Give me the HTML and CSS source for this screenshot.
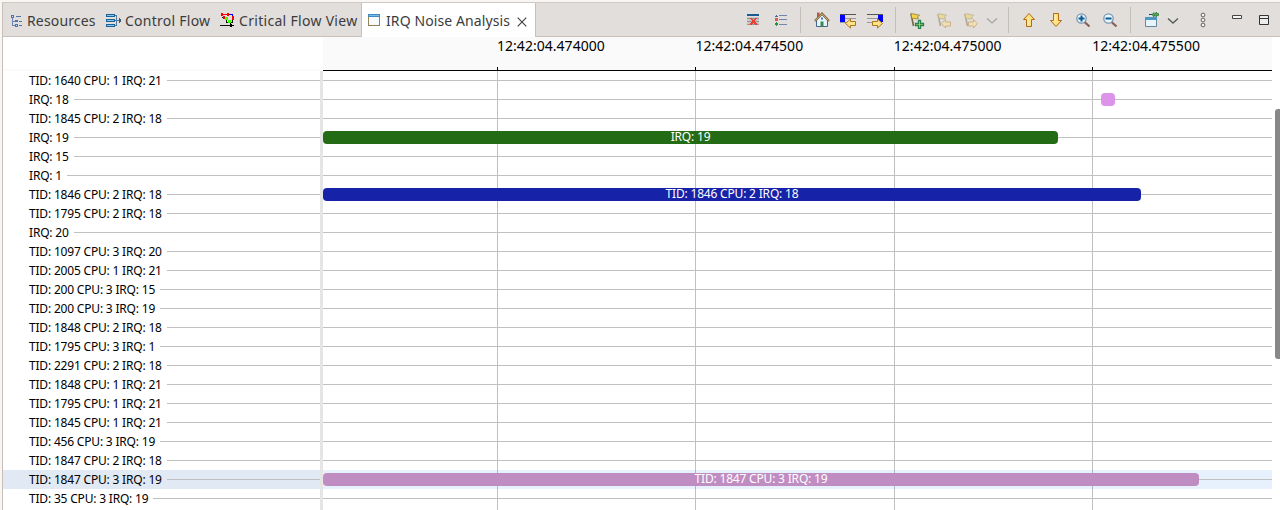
FILE: index.html
```html
<!DOCTYPE html>
<html lang="en">
<head>
<meta charset="utf-8">
<title>IRQ Noise Analysis</title>
<link rel="stylesheet" href="styles.css">
</head>
<body>
<div class="window">
  <header class="tabbar">
    <div class="tab t1">
      <svg class="ticon" viewBox="0 0 16 16" shape-rendering="crispEdges"><path d="M2.500 4v9M2 8.500h3M2 12.500h3" stroke="#6a86b8" fill="none"/><path d="M1 2h3v3H1zM5 7h3v2H5zM5 11h3v3H5zM6 3h5v1H6zM9 8h3v1H9zM9 12h3v1H9z" fill="#5273ad"/><path d="M2 3h1v1H2zM6 12h1v1H6z" fill="#d5deef"/></svg>
      <span class="name">Resources</span>
    </div>
    <div class="tab t2">
      <svg class="ticon" viewBox="0 0 16 16" shape-rendering="crispEdges"><path d="M.5 1.500h8v2h-8zM.5 6.500h8v2h-8zM.5 11.500h8v2h-8z" fill="#8fc1e5" stroke="#17649d"/><path d="M9 2.500h1.500v10H9M9 7.500h6" fill="none" stroke="#5b7897"/><path d="M13 5v5l2-2V7z" fill="#355b82"/></svg>
      <span class="name">Control Flow</span>
    </div>
    <div class="tab t3">
      <svg class="ticon" viewBox="0 0 16 16" shape-rendering="crispEdges"><path d="M2 1.500h5" stroke="#e00" fill="none"/><path d="M8 1.500h4.500V4" stroke="#00f" fill="none" stroke-width="1.500"/><path d="M2 4.500h4M6.500 5v4h6V6M0 12.500h12" stroke="#111" fill="none"/><path d="M1 0h2v3H1zM7 0h2v3H7zM12 3h2v4h-2zM3 3h2v3H3z" fill="#f00"/><path d="M5 4h3v3H5zM8 7h3v3H8z" fill="#3cff00"/><path d="M10 10l4 2.500-4 2z" fill="#000"/></svg>
      <span class="name">Critical Flow View</span>
    </div>
    <div class="tab active">
      <svg class="ticon" viewBox="0 0 16 16" shape-rendering="crispEdges"><path d="M.5 1.500h11v11H.5z" fill="#f8fbfd" stroke="#94835a"/><path d="M0 1h12v3H0z" fill="#4089bd"/><path d="M1 2h10v1H1z" fill="#77bce2"/></svg>
      <span class="name">IRQ Noise Analysis</span>
      <svg class="close" viewBox="0 0 10 10"><path d="M.7.7l8.600 8.600M9.300.7L.7 9.300" stroke="#3c3c3c" stroke-width="1.100"/></svg>
    </div>
    <div class="tools">
      <div class="group">
        <svg class="ic" viewBox="0 0 18 18" shape-rendering="crispEdges"><path d="M3 3h12v2H3z" fill="#185c92"/><path d="M3 6h12v8H3z" fill="#c8c8c8"/><path d="M3 7.500h12M3 10.500h12M3 13.500h12" stroke="#969696"/><path d="M6 7h2v1h1v1h1V8h1V7h2v1h-1v1h-1v2h1v1h1v2h-2v-1h-1v-1H9v1H8v1H6v-2h1v-1h1V9H7V8H6z" fill="#ed3e32"/></svg>
        <svg class="ic" viewBox="0 0 18 18" shape-rendering="crispEdges"><path d="M4 6V5h1V4h1v1h1v1z" fill="#426eaf"/><path d="M4 7h3v3H4z" fill="#e85550"/><path d="M5 11h1v1h1v2H6v1H5v-1H4v-2h1z" fill="#279246"/><path d="M8 4.500h8M8 8.500h8M8 13.500h8" stroke="#7384b1"/></svg>
      </div>
      <i class="sep"></i>
      <div class="group">
        <svg class="ic" viewBox="0 0 18 18"><path d="M4 1.500h2.500v4L4 8z" fill="#b95b42"/><path d="M3.500 9v6.500h11V9L9 3.500z" fill="#e6f3fd" stroke="#426687"/><path d="M2 10l7-7.500L16 10" fill="none" stroke="#79613b" stroke-width="2.200"/><path d="M2.300 9.600L9 2.800l6.700 6.800" fill="none" stroke="#d8b478"/><path d="M7.500 10.500h3v5h-3z" fill="#358b55"/><path d="M8 6.500h2v2H8z" fill="#487aad"/></svg>
        <svg class="ic" viewBox="0 0 18 18"><path d="M0 3.500h16" stroke="#555"/><path d="M5 7.500h11M0 11.500h6" stroke="#999"/><path d="M0 4h5v7H0z" fill="#00f"/><path d="M5.500 12.500l5-4.500v2.500h5v4h-5V17z" fill="#ffe28a" stroke="#ad751d"/></svg>
        <svg class="ic" viewBox="0 0 18 18"><path d="M0 3.500h16" stroke="#555"/><path d="M0 7.500h11M0 11.500h10" stroke="#999"/><path d="M11 4h5v7h-5z" fill="#00f"/><path d="M15.500 12.500l-5-4.500v2.500h-5v4h5V17z" fill="#ffe28a" stroke="#ad751d"/></svg>
      </div>
      <i class="sep"></i>
      <div class="group">
        <svg class="ic" viewBox="0 0 18 18"><path d="M3 2.500l2.500 12.500" stroke="#756747" stroke-width="1.600"/><path d="M3 3.500C5 1.500 6 4 11.500 4l-2 2 1 1.500C7.500 9 6 6 4 8z" fill="#f2d34b" stroke="#8d7932" stroke-width=".8"/><path d="M10.500 9.500h2v3h3v2h-3v3h-2v-3h-3v-2h3z" fill="#d8e65d" stroke="#26834c" stroke-width="1.300"/></svg>
        <svg class="ic dim" viewBox="0 0 18 18"><path d="M3 3l2.500 12" stroke="#756747" stroke-width="1.600"/><path d="M3 3.500C5 1.500 6 4 11.500 4l-2 2 1 1.500C7.500 9 6 6 4 8z" fill="#f2d34b" stroke="#8d7932" stroke-width=".8"/><path d="M6.500 12.500l4-4v2.500h5v4h-5v2z" fill="#ffe28a" stroke="#bd7a20"/></svg>
        <svg class="ic dim" viewBox="0 0 18 18"><path d="M3 3l2.500 12" stroke="#756747" stroke-width="1.600"/><path d="M3 3.500C5 1.500 6 4 11.500 4l-2 2 1 1.500C7.500 9 6 6 4 8z" fill="#f2d34b" stroke="#8d7932" stroke-width=".8"/><path d="M15.500 12.500l-4-4v2.500h-5v4h5v2z" fill="#ffe28a" stroke="#bd7a20"/></svg>
      </div>
      <svg class="chev c1" viewBox="0 0 12 8"><path d="M1 1.500l5 4.500 5-4.500" fill="none" stroke="#a5a7a5" stroke-width="1.300"/></svg>
      <i class="sep"></i>
      <div class="group">
        <svg class="ic" viewBox="0 0 18 18"><path d="M8 2.500L2.500 8.500h3v7h5v-7h3z" fill="#ffe184" stroke="#b06b13"/><path d="M7 8v6.500" stroke="#fff3bf"/></svg>
        <svg class="ic" viewBox="0 0 18 18"><path d="M8 15.500l5.500-6h-3v-7h-5v7h-3z" fill="#ffe184" stroke="#b06b13"/><path d="M7 3.500V11" stroke="#fff3bf"/></svg>
        <svg class="ic" viewBox="0 0 18 18"><path d="M9.500 11l5 4.500" stroke="#895f53" stroke-width="2.200"/><circle cx="6.500" cy="7.500" r="4.700" fill="#eaf6fb" stroke="#7695ae" stroke-width="1.200"/><path d="M3.500 7.500h6M6.500 4.500v6" stroke="#075b9b" stroke-width="2"/></svg>
        <svg class="ic" viewBox="0 0 18 18"><path d="M9.500 11l5 4.500" stroke="#895f53" stroke-width="2.200"/><circle cx="6.500" cy="7.500" r="4.700" fill="#eaf6fb" stroke="#7695ae" stroke-width="1.200"/><path d="M3.500 7.500h6" stroke="#075b9b" stroke-width="2"/></svg>
      </div>
      <i class="sep"></i>
      <div class="group">
        <svg class="ic" viewBox="0 0 18 18"><path d="M2.500 6.500h11v9h-11z" fill="#e8f4fc" stroke="#6687a2"/><path d="M2 6h12v3H2z" fill="#4b98c8"/><path d="M6 3.500h4" stroke="#164566"/><path d="M9 3.500l2-2v1.500h1l1.500-2v1.500h2v2h-2V6L12 4.500h-1V6z" fill="#55a548" stroke="#267338" stroke-width=".7"/></svg>
      </div>
      <svg class="chev c2" viewBox="0 0 12 8"><path d="M1 1.500l5 4.500 5-4.500" fill="none" stroke="#555b5b" stroke-width="1.400"/></svg>
      <svg class="dots" viewBox="0 0 6 16"><g fill="#f3f3f3" stroke="#666" stroke-width="1"><circle cx="3" cy="3" r="1.900"/><circle cx="3" cy="8" r="1.900"/><circle cx="3" cy="13" r="1.900"/></g></svg>
      <svg class="win min" viewBox="0 0 11 12"><path d="M.5 1.500h9v3h-9z" fill="#f5f5f5" stroke="#444"/></svg>
      <svg class="win" viewBox="0 0 11 12"><path d="M.5 1.500h9v9h-9zM0 4.500h10" fill="#ececec" stroke="#333"/></svg>
    </div>
  </header>
  <main class="view">
    <section class="names">
      <div class="corner"></div>
      <div class="row">TID: 1640 CPU: 1 IRQ: 21</div>
      <div class="row">IRQ: 18</div>
      <div class="row">TID: 1845 CPU: 2 IRQ: 18</div>
      <div class="row">IRQ: 19</div>
      <div class="row">IRQ: 15</div>
      <div class="row">IRQ: 1</div>
      <div class="row">TID: 1846 CPU: 2 IRQ: 18</div>
      <div class="row">TID: 1795 CPU: 2 IRQ: 18</div>
      <div class="row">IRQ: 20</div>
      <div class="row">TID: 1097 CPU: 3 IRQ: 20</div>
      <div class="row">TID: 2005 CPU: 1 IRQ: 21</div>
      <div class="row">TID: 200 CPU: 3 IRQ: 15</div>
      <div class="row">TID: 200 CPU: 3 IRQ: 19</div>
      <div class="row">TID: 1848 CPU: 2 IRQ: 18</div>
      <div class="row">TID: 1795 CPU: 3 IRQ: 1</div>
      <div class="row">TID: 2291 CPU: 2 IRQ: 18</div>
      <div class="row">TID: 1848 CPU: 1 IRQ: 21</div>
      <div class="row">TID: 1795 CPU: 1 IRQ: 21</div>
      <div class="row">TID: 1845 CPU: 1 IRQ: 21</div>
      <div class="row">TID: 456 CPU: 3 IRQ: 19</div>
      <div class="row">TID: 1847 CPU: 2 IRQ: 18</div>
      <div class="row selected">TID: 1847 CPU: 3 IRQ: 19</div>
      <div class="row">TID: 35 CPU: 3 IRQ: 19</div>
    </section>
    <div class="sash"></div>
    <section class="chart">
      <div class="scale">
        <span class="time">12:42:04.474000</span><span class="time">12:42:04.474500</span><span class="time">12:42:04.475000</span><span class="time">12:42:04.475500</span>
      </div>
      <div class="lanes">
        <div class="lane"></div>
        <div class="lane"><div class="bar pink" style="margin-left:778px;width:14px"></div></div>
        <div class="lane"></div>
        <div class="lane"><div class="bar green" style="width:735px">IRQ: 19</div></div>
        <div class="lane"></div>
        <div class="lane"></div>
        <div class="lane"><div class="bar blue" style="width:818px">TID: 1846 CPU: 2 IRQ: 18</div></div>
        <div class="lane"></div><div class="lane"></div><div class="lane"></div><div class="lane"></div>
        <div class="lane"></div><div class="lane"></div><div class="lane"></div><div class="lane"></div>
        <div class="lane"></div><div class="lane"></div><div class="lane"></div><div class="lane"></div>
        <div class="lane"></div><div class="lane"></div>
        <div class="lane selected"><div class="bar mauve" style="width:876px">TID: 1847 CPU: 3 IRQ: 19</div></div>
        <div class="lane"></div>
      </div>
    </section>
    <div class="scroll"><div class="thumb"></div></div>
  </main>
</div>
</body>
</html>
```
FILE: styles.css
```css
* { box-sizing: border-box; }
body { margin: 0; height: 510px; overflow: hidden; background: #f7f6f5; font-family: "Noto Sans", sans-serif; color: #000; }
svg { display: block; flex: none; }
.window { margin: 2px 0 0 2px; height: 508px; border-top: 1px solid #d0c9c2; border-left: 1px solid #c8bfb7; background: #fff; overflow: hidden; }
.tabbar { display: flex; height: 34px; background: #e1dedb; border-bottom: 1px solid #c9c1b9; }
.tab { display: flex; flex: none; align-items: center; height: 33px; padding-left: 7px; font-size: 14px; color: #3c3c3c; white-space: nowrap; }
.tab .name { line-height: 20px; padding-top: 2px; }
.ticon { width: 16px; height: 16px; margin-top: 3px; }
.t1 { width: 96px; }
.t1 .name { margin-left: 1px; letter-spacing: .15px; }
.t2 { width: 114px; }
.t2 .name { margin-left: 3px; letter-spacing: .25px; }
.t3 { width: 148px; }
.t3 .name { margin-left: 3px; letter-spacing: .3px; }
.active { width: 175px; height: 34px; padding: 0 0 1px 6px; background: #fff; border-left: 1px solid #c9c1b9; border-right: 1px solid #c9c1b9; }
.active .name { margin-left: 2px; width: 131px; letter-spacing: .1px; }
.close { width: 10px; height: 10px; margin-top: 4px; }
.tools { display: flex; flex: none; align-items: center; height: 33px; margin-left: 208px; }
.group { display: flex; gap: 9px; }
.ic { width: 18px; height: 18px; }
.dim { opacity: .45; }
.sep { width: 1px; height: 26px; margin: 0 11px; background: #c4beb8; }
.sep + .group { margin-left: 1px; }
.group + .sep { margin-left: 10px; }
.group:first-child + .sep { margin-left: 11px; }
.chev { width: 12px; height: 8px; margin-top: 2px; }
.c1 { margin-left: 6px; }
.c1 + .sep { margin-left: 10px; }
.c2 { margin-left: 6px; }
.dots { width: 6px; height: 16px; margin-left: 21px; margin-top: 1px; }
.win { width: 11px; height: 12px; margin-left: 16px; }
.min { margin-left: 26px; }
.view { display: flex; height: 473px; }
.names { width: 317px; flex: none; }
.corner { height: 34px; border-bottom: 2px solid #fafafa; }
.row { display: flex; align-items: center; height: 19px; padding-left: 26px; font-size: 12px; letter-spacing: -.19px; line-height: 19px; white-space: nowrap; }
.row::after { content: ""; flex: 1; height: 1px; margin-left: 5px; background: #c0c0c0; }
.row.selected { background: #e1e9f5; }
.sash { width: 3px; flex: none; margin-top: 34px; background: #e5e5e5; }
.chart { width: 949px; flex: none; }
.scale { display: flex; height: 34px; padding-left: 174px; background: #fafafa; border-bottom: 1px solid #000; overflow: hidden; }
.time { width: 198.400px; flex: none; height: 33px; font-size: 14px; line-height: 18px; letter-spacing: .03px; background: linear-gradient(#000, #000) 0 100% / 1px 3px no-repeat; }
.lanes { height: 439px; background:
  linear-gradient(#c0c0c0, #c0c0c0) 174px 0 / 1px 100% no-repeat,
  linear-gradient(#c0c0c0, #c0c0c0) 372px 0 / 1px 100% no-repeat,
  linear-gradient(#c0c0c0, #c0c0c0) 571px 0 / 1px 100% no-repeat,
  linear-gradient(#c0c0c0, #c0c0c0) 769px 0 / 1px 100% no-repeat; }
.lane { height: 19px; padding-top: 3px; background: linear-gradient(#c0c0c0, #c0c0c0) 0 9px / 100% 1px no-repeat; }
.lane.selected { background: linear-gradient(#c0c0c0, #c0c0c0) 0 9px / 100% 1px no-repeat, rgba(24, 131, 237, .11); }
.bar { height: 13px; border-radius: 4px; color: #fff; font-size: 12px; letter-spacing: -.19px; line-height: 11px; text-align: center; white-space: nowrap; }
.pink { background: #dc94eb; }
.green { background: #246b16; }
.blue { background: #1622a7; }
.mauve { background: #c08dc2; }
.scroll { width: 8px; padding: 72px 0 0 3px; }
.thumb { height: 250px; background: #888; border-radius: 3px 0 0 3px; }
```
